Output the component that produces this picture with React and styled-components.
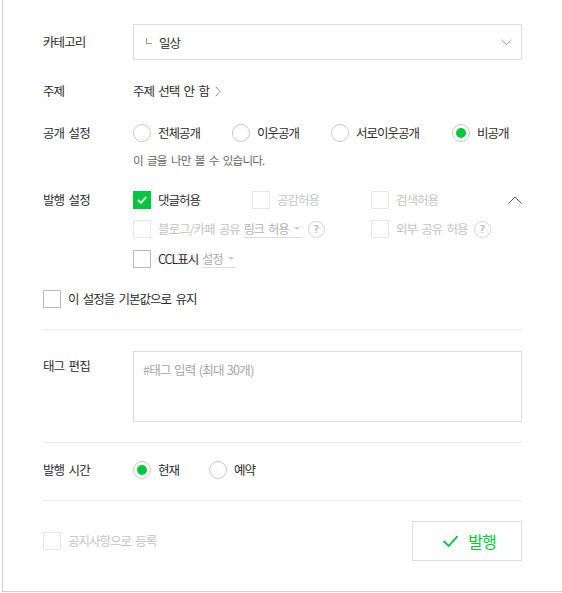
import React from "react";
import styled, { createGlobalStyle } from "styled-components";

const GREEN = "#00c73c";

const GlobalStyle = createGlobalStyle`
  html, body {
    margin: 0;
    padding: 0;
    background: #fff;
    overflow: hidden;
  }
  body {
    font-family: "Noto Sans CJK KR", "Noto Sans", sans-serif;
    color: #333;
    word-spacing: 2.5px;
  }
`;

const Panel = styled.div`
  margin-left: 2px;
  width: 560px;
  height: 592px;
  box-sizing: border-box;
  border-left: 1px solid #cfcfcf;
  border-bottom: 1px solid #cfcfcf;
  box-shadow: 0 1px 1px rgba(0, 0, 0, 0.06);
  padding: 24px 0 0 40px;
`;

const Content = styled.div`
  width: 479px;
`;

const Row = styled.div`
  display: flex;
  align-items: ${(p) => p.$align || "center"};
  justify-content: ${(p) => p.$justify || "flex-start"};
  margin-top: ${(p) => p.$mt || 0}px;
  padding-left: ${(p) => p.$indent || 0}px;
`;

const Label = styled.div`
  width: 90px;
  flex: none;
  font-size: 12.5px;
  letter-spacing: -0.9px;
  line-height: 18px;
  color: #2b2b2b;
  margin-top: ${(p) => p.$mt || 0}px;
`;

const Select = styled.div`
  flex: 1;
  height: 36px;
  box-sizing: border-box;
  border: 1px solid #ddd;
  display: flex;
  align-items: center;
  padding: 0 9px 0 12px;
  font-size: 12.5px;
  letter-spacing: -0.9px;
  color: #2b2b2b;
`;

const Sub = styled.span`
  width: 5px;
  height: 5px;
  border-left: 1px solid #999;
  border-bottom: 1px solid #999;
  margin: -2px 7px 0 0;
`;

const Text = styled.span`
  font-size: ${(p) => p.$size || 12.5}px;
  letter-spacing: -1px;
  line-height: 18px;
  color: ${(p) => p.$color || "#2b2b2b"};
  white-space: nowrap;
`;

const Help = styled.div`
  padding-left: 90px;
  margin-top: 10px;
  font-size: 11.5px;
  letter-spacing: -0.8px;
  line-height: 16px;
  color: #666;
`;

const Option = styled.label`
  display: flex;
  align-items: center;
  width: ${(p) => (p.$w ? `${p.$w}px` : "auto")};
  flex: none;
`;

const Radio = styled.span`
  width: 18px;
  height: 18px;
  box-sizing: border-box;
  border-radius: 50%;
  border: 1px solid #c8c8c8;
  background: #fff;
  margin-right: 7px;
  display: flex;
  align-items: center;
  justify-content: center;
  flex: none;

  &::after {
    content: "";
    width: 10px;
    height: 10px;
    border-radius: 50%;
    background: ${GREEN};
    display: ${(p) => (p.$on ? "block" : "none")};
  }
`;

const Box = styled.span`
  width: 18px;
  height: 18px;
  box-sizing: border-box;
  border: 1px solid
    ${(p) => (p.$on ? GREEN : p.$off ? "#e6e6e6" : "#b9b9b9")};
  background: ${(p) => (p.$on ? GREEN : "#fff")};
  margin-right: 7px;
  display: flex;
  align-items: center;
  justify-content: center;
  flex: none;
`;

const Drop = styled.span`
  display: inline-flex;
  align-items: center;
  gap: 5px;
  border-bottom: 1px solid #ddd;
  line-height: 16px;
  margin-left: 4px;
  color: ${(p) => p.$color || "#aaa"};
  font-size: 12px;
  letter-spacing: -0.9px;
  padding-right: 2px;
`;

const Caret = styled.span`
  width: 0;
  height: 0;
  border-left: 3px solid transparent;
  border-right: 3px solid transparent;
  border-top: 3px solid #ccc;
`;

const Question = styled.span`
  width: 17px;
  height: 17px;
  box-sizing: border-box;
  border-radius: 50%;
  border: 1px solid #d5d5d5;
  display: inline-flex;
  align-items: center;
  justify-content: center;
  font-family: "DejaVu Sans", sans-serif;
  font-size: 11px;
  color: #aaa;
  margin-left: 6px;
`;

const Divider = styled.div`
  height: 1px;
  background: #ebebeb;
  margin-top: ${(p) => p.$mt || 0}px;
`;

const TagArea = styled.textarea`
  flex: 1;
  height: 71px;
  box-sizing: border-box;
  border: 1px solid #ddd;
  padding: 9px 9px;
  margin: 0;
  resize: none;
  outline: none;
  font-family: inherit;
  font-size: 12.5px;
  letter-spacing: -0.7px;
  word-spacing: 1px;
  line-height: 18px;
  color: #333;

  &::placeholder {
    color: #a5a5a5;
  }
`;

const PublishButton = styled.button`
  width: 110px;
  height: 40px;
  box-sizing: border-box;
  border: 1px solid #ddd;
  background: #fff;
  display: flex;
  align-items: center;
  justify-content: center;
  gap: 8px;
  padding: 0 0 0 3px;
  font-family: inherit;
  font-size: 16px;
  letter-spacing: -1px;
  color: ${GREEN};
  cursor: pointer;
`;

const Tick = ({ color = "#fff", w = 10, h = 8, sw = 2 }) => (
  <svg width={w} height={h} viewBox="0 0 10 8" fill="none">
    <polyline
      points="1,4 4,6.8 9,1.2"
      stroke={color}
      strokeWidth={sw}
      vectorEffect="non-scaling-stroke"
    />
  </svg>
);

const Chevron = ({ dir }) => {
  if (dir === "down")
    return (
      <svg width="11" height="7" viewBox="0 0 11 7" style={{ marginLeft: "auto" }}>
        <polyline points="0.5,0.8 5.5,5.5 10.5,0.8" fill="none" stroke="#999" strokeWidth="1" />
      </svg>
    );
  if (dir === "up")
    return (
      <svg width="14" height="8" viewBox="0 0 14 8" style={{ marginLeft: "auto" }}>
        <polyline points="0.5,7.5 7,1 13.5,7.5" fill="none" stroke="#555" strokeWidth="1" />
      </svg>
    );
  return (
    <svg width="6" height="11" viewBox="0 0 6 11" style={{ marginLeft: 6 }}>
      <polyline points="0.8,0.8 5,5.5 0.8,10.2" fill="none" stroke="#888" strokeWidth="1" />
    </svg>
  );
};

const RadioOption = ({ w, on, children }) => (
  <Option $w={w}>
    <Radio $on={on} />
    <Text>{children}</Text>
  </Option>
);

const CheckOption = ({ w, on, off, children }) => (
  <Option $w={w}>
    <Box $on={on} $off={off}>
      {on && <Tick />}
    </Box>
    {children}
  </Option>
);

export default function App() {
  return (
    <>
      <GlobalStyle />
      <Panel>
        <Content>
          <Row>
            <Label>카테고리</Label>
            <Select>
              <Sub />
              일상
              <Chevron dir="down" />
            </Select>
          </Row>

          <Row $mt={22}>
            <Label>주제</Label>
            <Text>주제 선택 안 함</Text>
            <Chevron dir="right" />
          </Row>

          <Row $mt={24}>
            <Label>공개 설정</Label>
            <RadioOption w={99}>전체공개</RadioOption>
            <RadioOption w={99}>이웃공개</RadioOption>
            <RadioOption w={121}>서로이웃공개</RadioOption>
            <RadioOption on>비공개</RadioOption>
          </Row>
          <Help>이 글을 나만 볼 수 있습니다.</Help>

          <Row $mt={23}>
            <Label>발행 설정</Label>
            <CheckOption w={119} on>
              <Text>댓글허용</Text>
            </CheckOption>
            <CheckOption w={119} off>
              <Text $color="#c4c4c4">공감허용</Text>
            </CheckOption>
            <CheckOption off>
              <Text $color="#c4c4c4">검색허용</Text>
            </CheckOption>
            <Chevron dir="up" />
          </Row>
          <Row $mt={11} $indent={90}>
            <CheckOption w={238} off>
              <Text $color="#c4c4c4">블로그/카페 공유</Text>
              <Drop $color="#b0b0b0">
                링크 허용
                <Caret />
              </Drop>
              <Question>?</Question>
            </CheckOption>
            <CheckOption off>
              <Text $color="#c4c4c4">외부 공유 허용</Text>
              <Question>?</Question>
            </CheckOption>
          </Row>
          <Row $mt={12} $indent={90}>
            <CheckOption>
              <Text>CCL표시</Text>
              <Drop $color="#aaa">
                설정
                <Caret />
              </Drop>
            </CheckOption>
          </Row>

          <Row $mt={22}>
            <CheckOption>
              <Text>이 설정을 기본값으로 유지</Text>
            </CheckOption>
          </Row>

          <Divider $mt={21} />

          <Row $mt={21} $align="flex-start">
            <Label $mt={6}>태그 편집</Label>
            <TagArea placeholder="#태그 입력 (최대 30개)" />
          </Row>

          <Divider $mt={20} />

          <Row $mt={18}>
            <Label>발행 시간</Label>
            <RadioOption w={76} on>
              현재
            </RadioOption>
            <RadioOption>예약</RadioOption>
          </Row>

          <Divider $mt={21} />

          <Row $mt={20} $justify="space-between">
            <CheckOption off>
              <Text $color="#c4c4c4">공지사항으로 등록</Text>
            </CheckOption>
            <PublishButton>
              <Tick color={GREEN} w={19} h={14} sw={1.8} />
              발행
            </PublishButton>
          </Row>
        </Content>
      </Panel>
    </>
  );
}
